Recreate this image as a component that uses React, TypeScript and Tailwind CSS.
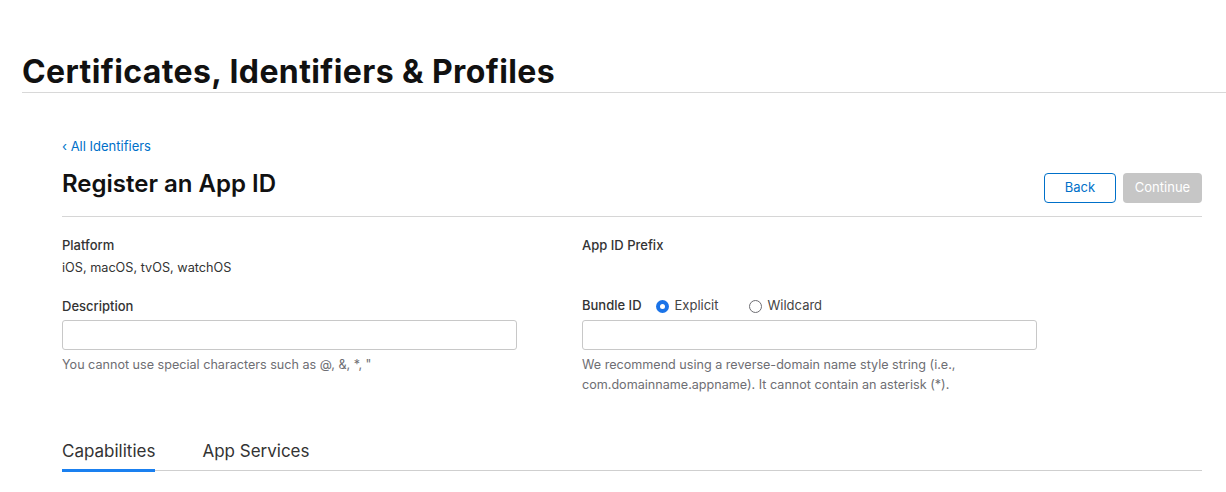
import React from "react";

function Radio({ checked }: { checked: boolean }) {
  return checked ? (
    <span className="w-[13px] h-[13px] rounded-full bg-[#1a73e8] flex items-center justify-center shrink-0">
      <span className="w-[5px] h-[5px] rounded-full bg-white" />
    </span>
  ) : (
    <span className="block w-[13px] h-[13px] rounded-full border border-[#6e6e73] bg-white shrink-0" />
  );
}

export default function App() {
  return (
    <div className="w-[1226px] h-[492px] bg-white overflow-hidden text-[#1d1d1f]" style={{ fontFamily: "Inter, 'Noto Sans', sans-serif" }}>
      <div className="pl-[22px] pt-[52px]">
        <h1 className="text-[32px] leading-[40px] font-bold tracking-[0.4px] text-[#111]">Certificates, Identifiers &amp; Profiles</h1>
        <div className="h-px bg-[#d8d8d8]" />
      </div>
      <div className="mx-[62px] w-[1140px] pt-[44px]">
        <a className="text-[13px] leading-[18px] text-[#0070c9] block">‹ All Identifiers</a>
        <div className="flex items-center justify-between mt-[9px] h-[40px]">
          <h2 className="text-[24px] leading-[30px] font-semibold text-[#111]">Register an App ID</h2>
          <div className="flex gap-[7px] mt-[8px]">
            <button className="w-[72px] h-[30px] rounded-[4px] border border-[#0070c9] text-[#0070c9] text-[13px] bg-white">Back</button>
            <button className="w-[79px] h-[30px] rounded-[4px] bg-[#c6c6c6] text-white text-[13px]">Continue</button>
          </div>
        </div>
        <div className="h-px bg-[#d6d6d6] mt-[12px]" />
        <div className="grid grid-cols-[520px_1fr] mt-[19px]">
          <div>
            <div className="text-[13px] leading-[18px] font-medium text-[#333]">Platform</div>
            <div className="text-[12.7px] leading-[18px] text-[#333] mt-[5px]">iOS, macOS, tvOS, watchOS</div>
            <div className="text-[13px] leading-[18px] font-medium text-[#333] mt-[20px]">Description</div>
            <div className="w-[455px] h-[30px] border border-[#c8c8c8] rounded-[3px] mt-[5px]" />
            <div className="text-[12.6px] leading-[20px] text-[#6e6e73] mt-[5px]">You cannot use special characters such as @, &amp;, *, "</div>
          </div>
          <div>
            <div className="text-[13px] leading-[18px] font-medium text-[#333]">App ID Prefix</div>
            <div className="h-[18px] mt-[5px]" />
            <div className="flex items-center mt-[20px] h-[18px]">
              <span className="text-[13px] font-medium text-[#333] mr-[14px]">Bundle ID</span>
              <Radio checked />
              <span className="text-[13px] text-[#444] ml-[6px]">Explicit</span>
              <span className="ml-[30px]"><Radio checked={false} /></span>
              <span className="text-[13px] text-[#444] ml-[6px]">Wildcard</span>
            </div>
            <div className="w-[455px] h-[30px] border border-[#c8c8c8] rounded-[3px] mt-[5px]" />
            <div className="text-[12.6px] leading-[20px] text-[#6e6e73] mt-[5px]">
              We recommend using a reverse-domain name style string (i.e.,
              <br />
              com.domainname.appname). It cannot contain an asterisk (*).
            </div>
          </div>
        </div>
        <div className="flex mt-[44px] border-b border-[#cfcfcf]">
          <div className="text-[17px] leading-[24px] text-[#333] pb-[6px] border-b-[3px] border-[#1a80f0] mb-[-2px]">Capabilities</div>
          <div className="text-[17px] leading-[24px] text-[#333] ml-[47px]">App Services</div>
        </div>
      </div>
    </div>
  );
}
